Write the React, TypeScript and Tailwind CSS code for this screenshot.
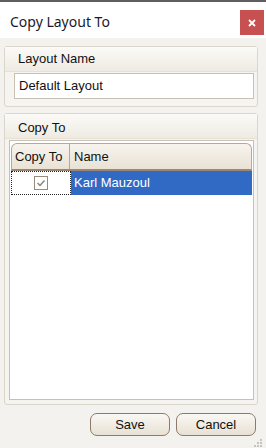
import React from "react";

export default function App() {
  const f = { fontFamily: '"Liberation Sans", Arial, sans-serif' };
  return (
    <div className="w-[266px] h-[448px] flex flex-col bg-[#f4f2ee] border-t-2 border-[#5f5f5f] overflow-hidden" style={f}>
      {/* Title bar */}
      <div className="h-[36px] bg-white flex items-start justify-between shrink-0">
        <div className="pl-[10px] pt-[9px] text-[14px] text-[#1a1a2a]" style={{ fontFamily: '"Noto Sans", "Open Sans", sans-serif' }}>
          Copy Layout To
        </div>
        <div className="mt-[8px] mr-[2px] w-[24px] h-[25px] bg-[#c75050] flex items-center justify-center">
          <svg width="8" height="8" viewBox="0 0 8 8">
            <path d="M1 1 L7 7 M7 1 L1 7" stroke="white" strokeWidth="1.8" />
          </svg>
        </div>
      </div>
      {/* Body */}
      <div className="flex-1 flex flex-col px-[4px] pt-[8px]">
        {/* Panel 1 */}
        <div className="w-[254px] h-[61px] border border-[#dcd5c9] rounded-[3px] bg-[#f6f4f0] flex flex-col">
          <div className="h-[25px] shrink-0 bg-gradient-to-b from-[#fbfaf7] to-[#efebe3] border-b border-[#e6e0d5] text-[13px] text-[#111] pl-[13px] leading-[24px]">
            Layout Name
          </div>
          <div className="pl-[9px] pt-[1px]">
            <div className="w-[240px] h-[26px] bg-white border border-[#c9c0b3] text-[13px] text-[#111] pl-[4px] leading-[24px]">
              Default Layout
            </div>
          </div>
        </div>
        {/* Panel 2 */}
        <div className="mt-[6px] w-[254px] h-[292px] border border-[#dcd5c9] rounded-[3px] bg-[#f6f4f0] flex flex-col">
          <div className="h-[25px] bg-gradient-to-b from-[#fbfaf7] to-[#efebe3] border-b border-[#e6e0d5] text-[13px] text-[#111] pl-[13px] leading-[27px] shrink-0">
            Copy To
          </div>
          <div className="ml-[4px] mt-[1px] mb-[4px] w-[245px] flex-1 border border-[#c9c0b3] bg-white flex flex-col p-[1px]">
            {/* header */}
            <div className="mt-[1px] h-[28px] flex rounded-t-[6px] border border-[#b7a99a] border-b-2 border-b-[#9a8676] bg-gradient-to-b from-[#f7f4ee] to-[#e9e2d5] text-[13px] text-[#111]">
              <div className="w-[58px] border-r border-[#b7a99a] pl-[3px] leading-[26px]">Copy To</div>
              <div className="flex-1 pl-[4px] leading-[26px]">Name</div>
            </div>
            {/* row */}
            <div className="h-[24px] flex text-[13px]">
              <div className="w-[60px] border border-dotted border-[#222] bg-white flex items-center justify-center">
                <div className="w-[14px] h-[14px] border border-[#9a8a7c] flex items-center justify-center bg-white">
                  <svg width="10" height="8" viewBox="0 0 10 8">
                    <path d="M1.5 4 L4 6.5 L8.5 1.5" stroke="#8a8580" strokeWidth="1.5" fill="none" />
                  </svg>
                </div>
              </div>
              <div className="flex-1 bg-[#316ac5] text-white pl-[3px] leading-[24px]">Karl Mauzoul</div>
            </div>
          </div>
        </div>
        {/* Buttons */}
        <div className="flex justify-end gap-[6px] pt-[8px] pr-[6px]">
          <button className="w-[80px] h-[23px] rounded-[7px] border border-[#8f7a6a] bg-gradient-to-b from-[#faf8f4] to-[#e8e1d4] text-[13px] text-[#111]">Save</button>
          <button className="w-[80px] h-[23px] rounded-[7px] border border-[#8f7a6a] bg-gradient-to-b from-[#faf8f4] to-[#e8e1d4] text-[13px] text-[#111]">Cancel</button>
        </div>
        <div className="flex justify-end pr-[0px] mt-[2px]">
          <svg width="9" height="9" viewBox="0 0 9 9">
            <rect x="7" y="1" width="2" height="2" fill="#c9c3b8" />
            <rect x="4" y="4" width="2" height="2" fill="#c9c3b8" />
            <rect x="7" y="4" width="2" height="2" fill="#c9c3b8" />
            <rect x="1" y="7" width="2" height="2" fill="#c9c3b8" />
            <rect x="4" y="7" width="2" height="2" fill="#c9c3b8" />
            <rect x="7" y="7" width="2" height="2" fill="#c9c3b8" />
          </svg>
        </div>
      </div>
    </div>
  );
}
